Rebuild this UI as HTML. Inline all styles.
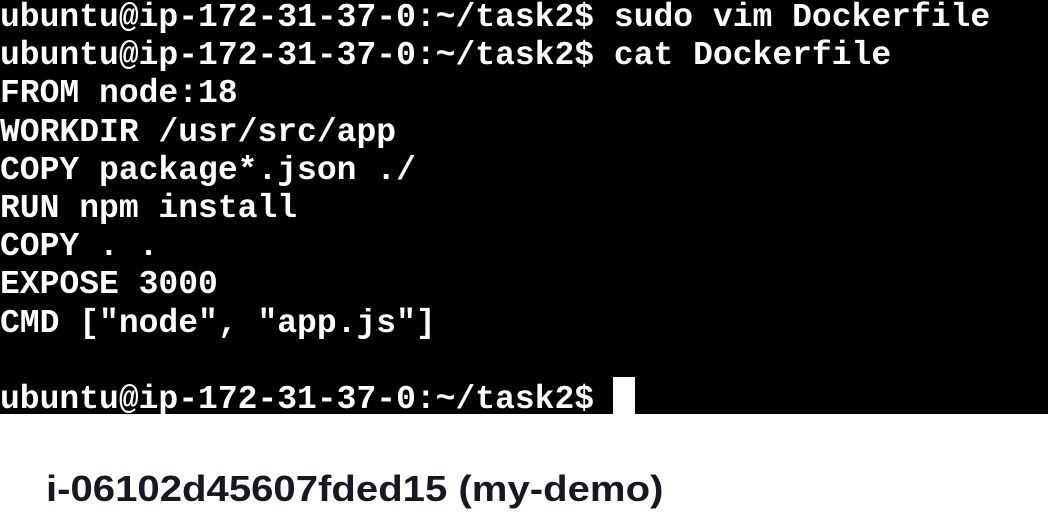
<!DOCTYPE html>
<html><head><meta charset="utf-8"><style>
html,body{margin:0;padding:0;width:1048px;height:524px;background:#fff;overflow:hidden}
.term{position:absolute;left:0;top:0;width:1048px;height:414px;background:#000}
pre{position:absolute;left:0;top:-1px;margin:0;font-family:"Liberation Mono",monospace;font-size:33px;line-height:38.2px;color:#fff;font-weight:bold;white-space:pre}
.cur{position:absolute;left:613px;top:377px;width:22px;height:37px;background:#fff}
.title{position:absolute;left:46px;top:469px;font-family:"Liberation Sans",sans-serif;font-weight:bold;font-size:36px;line-height:40px;color:#16191f;white-space:nowrap;transform-origin:0 0;transform:scaleX(1.114)}
</style></head><body>
<div class="term"><pre>ubuntu@ip-172-31-37-0:~/task2$ sudo vim Dockerfile
ubuntu@ip-172-31-37-0:~/task2$ cat Dockerfile
FROM node:18
WORKDIR /usr/src/app
COPY package*.json ./
RUN npm install
COPY . .
EXPOSE 3000
CMD ["node", "app.js"]

ubuntu@ip-172-31-37-0:~/task2$</pre><div class="cur"></div></div>
<div class="title">i-06102d45607fded15 (my-demo)</div>
</body></html>
